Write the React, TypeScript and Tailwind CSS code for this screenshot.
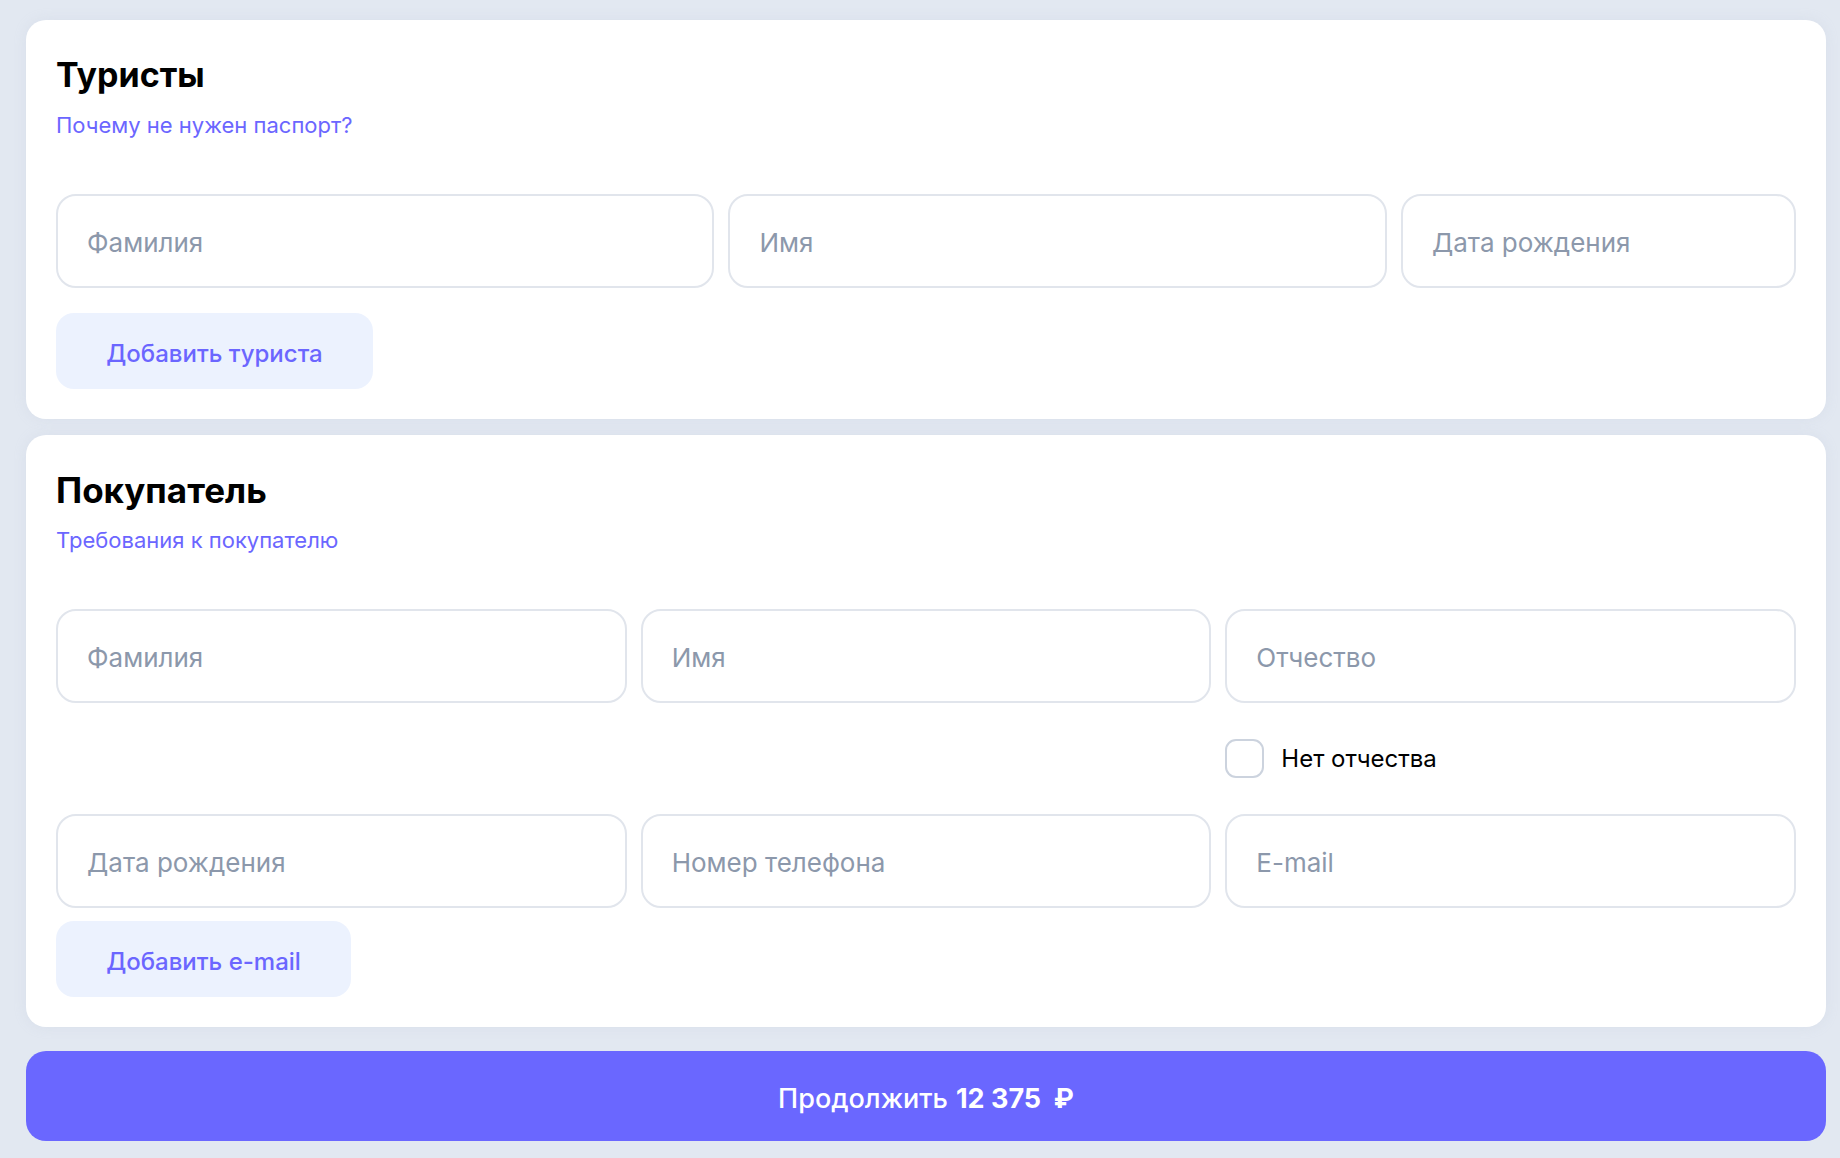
import React from "react";

const font = { fontFamily: "Inter, 'Noto Sans', sans-serif" };

function Field({ placeholder }: { placeholder: string }) {
  return (
    <input
      placeholder={placeholder}
      className="h-[94px] w-full rounded-[20px] border-2 border-[#e1e5ec] bg-white px-[29px] pt-[3px] text-[26px] text-[#1f2937] outline-none placeholder:text-[#8c98ab]"
    />
  );
}

export default function App() {
  return (
    <div
      className="min-h-[1158px] bg-[#e2e8f1] pt-[20px] pl-[26px] pr-[14px] pb-[17px]"
      style={font}
    >
      <div className="flex flex-col gap-[16px]">
        <section className="rounded-[20px] bg-white px-[30px] pt-[35px] pb-[30px] shadow-[0_0_12px_rgba(190,200,220,0.25)]">
          <h2 className="text-[34px] font-bold leading-[40px] text-black">Туристы</h2>
          <a className="mt-[16px] block text-[22px] leading-[28px] text-[#6b66ff]">
            Почему не нужен паспорт?
          </a>
          <div className="mt-[55px] grid grid-cols-[5fr_5fr_3fr] gap-[14px]">
            <Field placeholder="Фамилия" />
            <Field placeholder="Имя" />
            <Field placeholder="Дата рождения" />
          </div>
          <button className="mt-[25px] h-[76px] w-[317px] rounded-[18px] bg-[#ecf2fe] pt-[5px] text-[24px] font-medium text-[#6b66ff]">
            Добавить туриста
          </button>
        </section>

        <section className="rounded-[20px] bg-white px-[30px] pt-[35px] pb-[30px] shadow-[0_0_12px_rgba(190,200,220,0.25)]">
          <h2 className="text-[35px] font-bold leading-[40px] text-black">Покупатель</h2>
          <a className="mt-[16px] block text-[22px] leading-[28px] text-[#6b66ff]">
            Требования к покупателю
          </a>
          <div className="mt-[55px] grid grid-cols-3 gap-[14px]">
            <Field placeholder="Фамилия" />
            <Field placeholder="Имя" />
            <Field placeholder="Отчество" />
          </div>
          <div className="grid grid-cols-3 gap-[14px] py-[36px]">
            <label className="col-start-3 flex items-center gap-[17px]">
              <span className="h-[39px] w-[39px] shrink-0 rounded-[11px] border-2 border-[#ccd3de] bg-white" />
              <span className="text-[24px] leading-[28px] text-black">Нет отчества</span>
            </label>
          </div>
          <div className="grid grid-cols-3 gap-[14px]">
            <Field placeholder="Дата рождения" />
            <Field placeholder="Номер телефона" />
            <Field placeholder="E-mail" />
          </div>
          <button className="mt-[13px] h-[76px] w-[295px] rounded-[18px] bg-[#ecf2fe] pt-[5px] text-[24px] font-medium text-[#6b66ff]">
            Добавить e-mail
          </button>
        </section>

        <button className="mt-[8px] flex h-[90px] w-full items-center justify-center gap-[8px] rounded-[20px] bg-[#6a67ff] pt-[7px] text-[27px] text-white">
          <span className="font-medium">Продолжить</span>
          <span className="font-bold">12 375&nbsp;&nbsp;₽</span>
        </button>
      </div>
    </div>
  );
}
